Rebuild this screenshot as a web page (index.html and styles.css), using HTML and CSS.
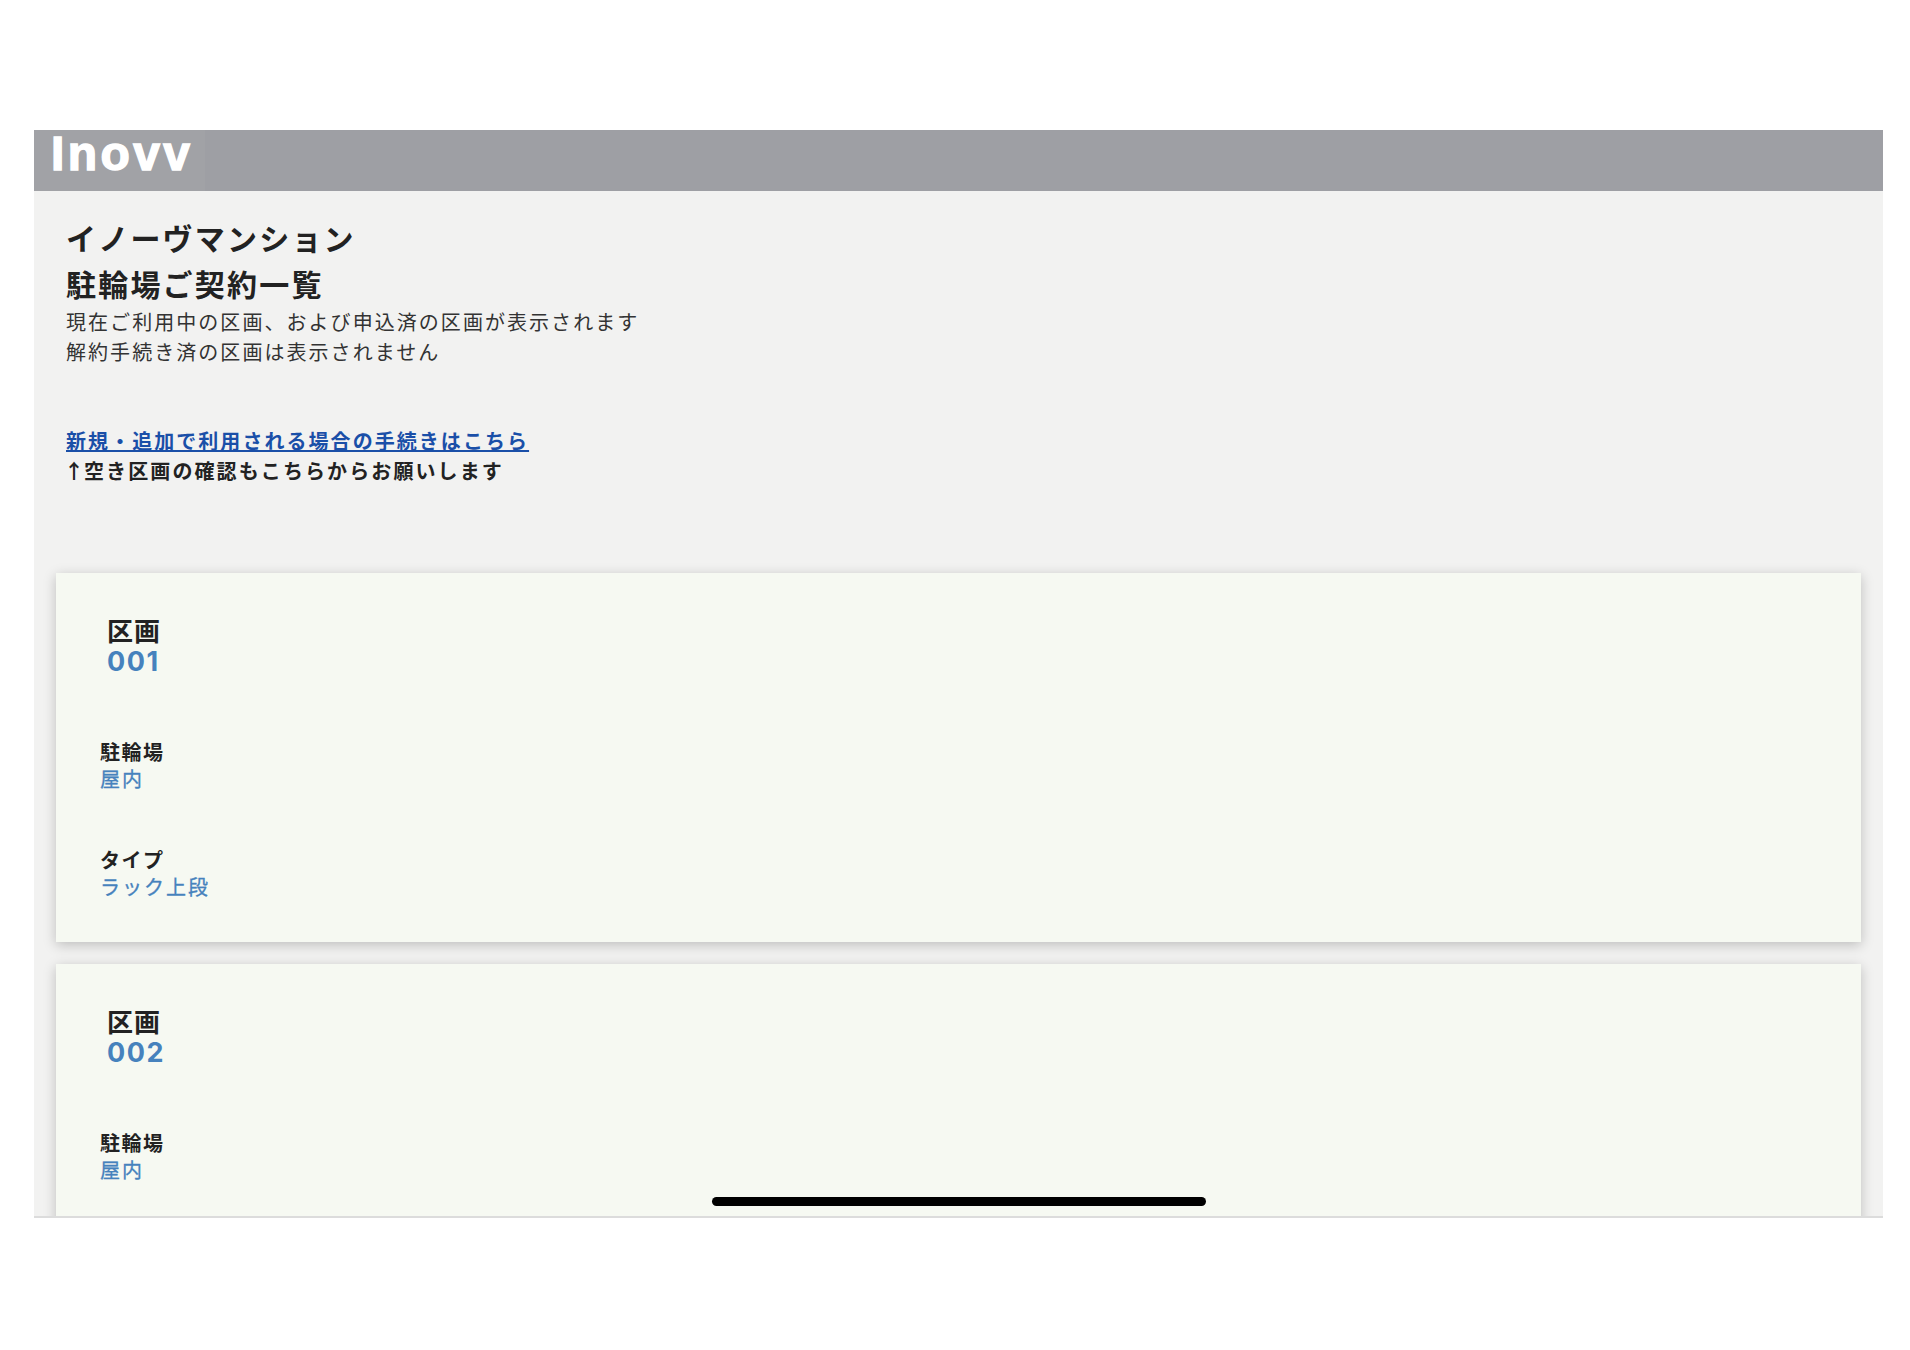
FILE: index.html
```html
<!DOCTYPE html>
<html lang="ja">
<head>
    <meta charset="UTF-8">
    <title>駐輪場ご契約一覧</title>
    <link rel="stylesheet" href="styles.css">
</head>
<body>
<div class="frame">
    <header class="topbar">
        <span class="logo">Inovv</span>
    </header>

    <main class="content">
        <section class="intro">
            <h1 class="mansion">イノーヴマンション</h1>
            <h2 class="page-title">駐輪場ご契約一覧</h2>
            <p class="note">現在ご利用中の区画、および申込済の区画が表示されます</p>
            <p class="note">解約手続き済の区画は表示されません</p>
            <a class="apply-link" href="#">新規・追加で利用される場合の手続きはこちら</a>
            <p class="apply-note"><span class="arrow">↑</span>空き区画の確認もこちらからお願いします</p>
        </section>

        <!-- 区画カード -->
        <div class="card">
            <div class="slot">
                <div class="slot-label">区画</div>
                <div class="slot-no">001</div>
            </div>
            <dl class="field">
                <dt>駐輪場</dt>
                <dd>屋内</dd>
            </dl>
            <dl class="field">
                <dt>タイプ</dt>
                <dd>ラック上段</dd>
            </dl>
        </div>

        <div class="card">
            <div class="slot">
                <div class="slot-label">区画</div>
                <div class="slot-no">002</div>
            </div>
            <dl class="field">
                <dt>駐輪場</dt>
                <dd>屋内</dd>
            </dl>
        </div>
    </main>

    <div class="home-bar"></div>
</div>
</body>
</html>
```

FILE: styles.css
```css
body {
    margin: 0;
    background-color: #fff;
    color: #222;
    font-family: "Noto Sans CJK JP", "Noto Sans", sans-serif;
}
.frame {
    position: relative;
    display: flex;
    flex-direction: column;
    height: 1088px;
    margin: 130px 27px 0 34px;
    background-color: #f2f2f1;
    border-bottom: 2px solid #dcdcdc;
    box-sizing: border-box;
}
.topbar {
    flex: none;
    height: 61px;
    background-color: #9e9fa4;
}
.logo {
    display: block;
    width: 171px;
    height: 61px;
    padding-left: 17px;
    box-sizing: border-box;
    background-color: #a1a2a6;
    color: #fff;
    font-family: "Liberation Sans", sans-serif;
    font-size: 48px;
    font-weight: bold;
    line-height: 48px;
    letter-spacing: 3.4px;
    -webkit-text-stroke: 1.5px #fff;
}
.content {
    flex: 1;
    min-height: 0;
    overflow: hidden;
}
.intro {
    padding: 23px 32px 87px;
}
.mansion,
.page-title {
    margin: 0;
    font-size: 30px;
    font-weight: 700;
    line-height: 46px;
    letter-spacing: 2.2px;
}
.page-title {
    margin-bottom: 1px;
}
.note {
    margin: 0;
    font-size: 20px;
    line-height: 30px;
    letter-spacing: 2.05px;
    color: #333;
}
.apply-link {
    display: block;
    margin-top: 59px;
    font-size: 20px;
    font-weight: 700;
    line-height: 30px;
    letter-spacing: 2.05px;
    color: #1a4fa8;
}
.apply-note {
    margin: 0;
    font-size: 20px;
    font-weight: 700;
    line-height: 30px;
    letter-spacing: 2.1px;
    color: #222;
}
.arrow {
    margin-left: -2px;
    letter-spacing: 0;
}
.card {
    height: 369px;
    margin: 0 22px 22px;
    padding: 45px 44px 0;
    box-sizing: border-box;
    background-color: #f6f9f2;
    box-shadow: 0 3px 12px rgba(0, 0, 0, 0.22);
}
.slot {
    padding-left: 7px;
    margin-bottom: 62px;
}
.slot-label {
    margin-bottom: 2px;
    font-family: "Inter", "Noto Sans CJK JP", sans-serif;
    font-size: 26px;
    font-weight: 700;
    line-height: 28px;
    letter-spacing: 1px;
}
.slot-no {
    font-family: "Inter", sans-serif;
    font-size: 27px;
    font-weight: 700;
    line-height: 28px;
    letter-spacing: 1.5px;
    color: #4682bd;
}
.field {
    margin: 0 0 54px;
}
.field dt {
    font-size: 20px;
    font-weight: 700;
    line-height: 27px;
    letter-spacing: 1.5px;
}
.field dd {
    margin: 0;
    font-size: 20px;
    line-height: 27px;
    letter-spacing: 2px;
    color: #4682bd;
    -webkit-text-stroke: 0.3px #4682bd;
}
.home-bar {
    position: absolute;
    left: 678px;
    top: 1067px;
    width: 494px;
    height: 9px;
    border-radius: 5px;
    background-color: #000;
}
```
